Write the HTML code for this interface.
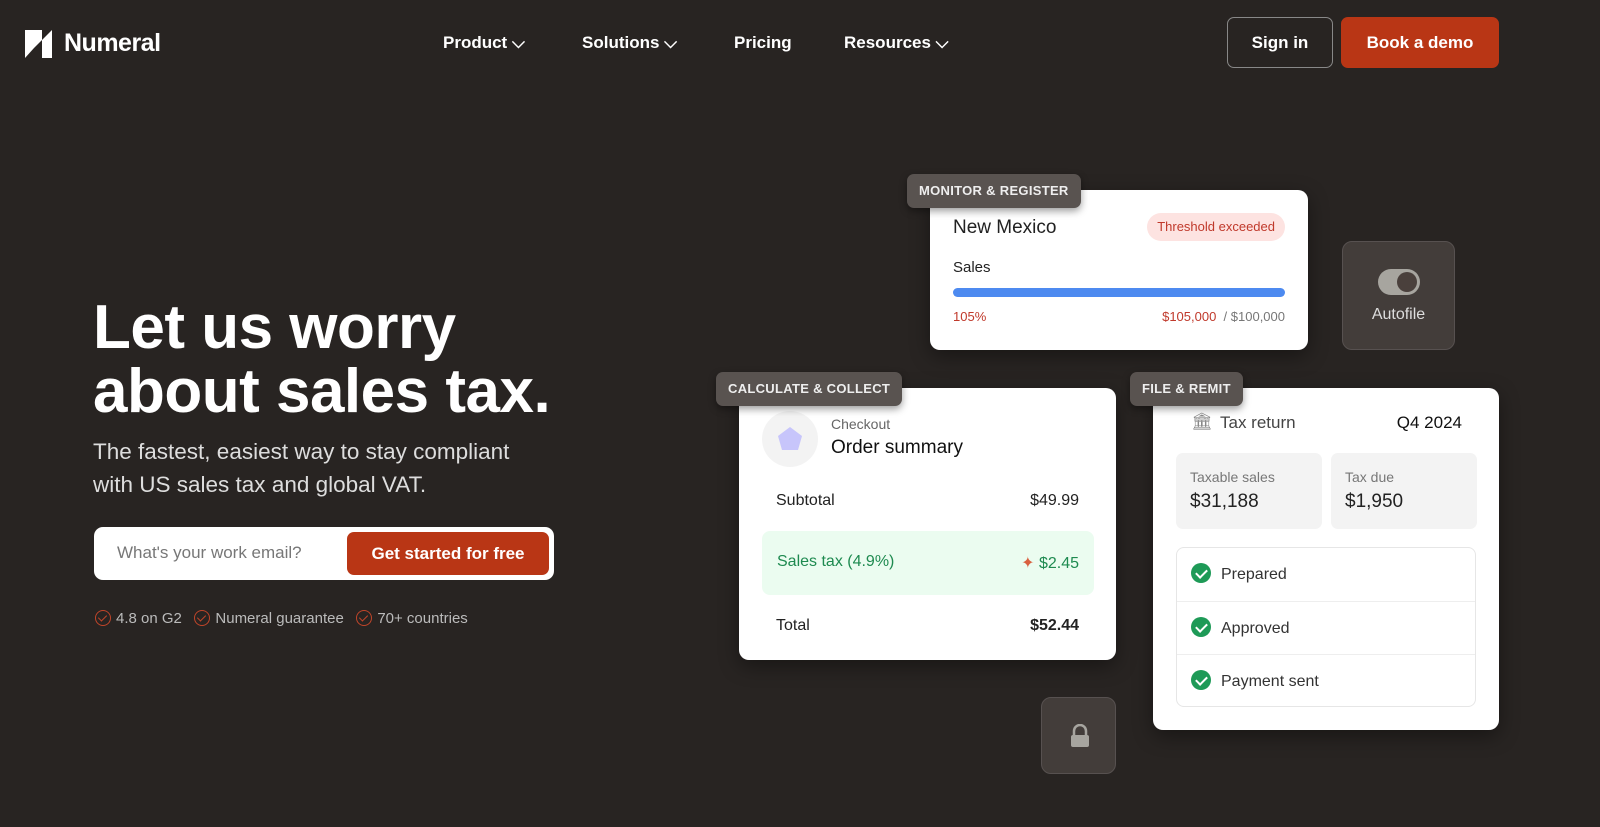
<!DOCTYPE html>
<html><head><meta charset="utf-8"><style>
*{box-sizing:border-box;margin:0;padding:0}
body{width:1600px;height:827px;background:#282422;font-family:"Liberation Sans",sans-serif;color:#fff;position:relative;overflow:hidden}
.a{position:absolute}
.nav{font-size:17px;font-weight:bold;top:33px}
.card{background:#fff;border-radius:10px;color:#222;box-shadow:0 6px 20px rgba(0,0,0,.4)}
.tag{background:#595350;color:#eee;font-size:13px;font-weight:bold;letter-spacing:.3px;padding:0 12px;height:34px;line-height:34px;border-radius:7px;box-shadow:0 3px 8px rgba(0,0,0,.4)}
.chk{display:inline-block;width:16px;height:16px;border:1.5px solid #c0452a;border-radius:50%;vertical-align:-3px;margin-right:5px;position:relative}
.chk:after{content:"";position:absolute;left:4px;top:2px;width:4px;height:7px;border:solid #c0452a;border-width:0 1.5px 1.5px 0;transform:rotate(45deg)}
.g{display:inline-block;width:20px;height:20px;background:#1e9a57;border-radius:50%;position:relative;vertical-align:-4px;margin-right:10px}
.g:after{content:"";position:absolute;left:7px;top:4px;width:5px;height:9px;border:solid #fff;border-width:0 2px 2px 0;transform:rotate(45deg)}
.row{position:absolute;left:0;right:0;height:53px;line-height:53px;padding-left:14px;font-size:16px;color:#333}
</style></head><body>
<div class="a" style="left:25px;top:30px;width:27px;height:28px">
<svg width="27" height="28"><polygon points="0,0 9,0 9,18 0,28" fill="#fff"/><polygon points="27,0 27,28 17,28 17,10" fill="#fff"/><polygon points="9,18 17,10 17,0 9,0" fill="#fff"/></svg></div>
<div class="a" style="left:64px;top:29px;font-size:25px;font-weight:bold;letter-spacing:-.5px">Numeral</div>
<div class="a nav" style="left:443px">Product ⌵</div>
<div class="a nav" style="left:582px">Solutions ⌵</div>
<div class="a nav" style="left:734px">Pricing</div>
<div class="a nav" style="left:844px">Resources ⌵</div>
<div class="a" style="left:1227px;top:17px;width:106px;height:51px;border:1px solid #888;border-radius:7px;text-align:center;line-height:49px;font-size:17px;font-weight:bold">Sign in</div>
<div class="a" style="left:1341px;top:17px;width:158px;height:51px;background:#b93615;border-radius:7px;text-align:center;line-height:51px;font-size:17px;font-weight:bold">Book a demo</div>

<div class="a" style="left:93px;top:296px;font-size:62px;font-weight:bold;line-height:64px;letter-spacing:-.5px">Let us worry<br>about sales tax.</div>
<div class="a" style="left:93px;top:435px;font-size:22.5px;line-height:33px;color:#ddd">The fastest, easiest way to stay compliant<br>with US sales tax and global VAT.</div>
<div class="a" style="left:94px;top:527px;width:460px;height:53px;background:#fff;border-radius:9px"></div>
<div class="a" style="left:117px;top:543px;font-size:17px;color:#777">What's your work email?</div>
<div class="a" style="left:347px;top:532px;width:202px;height:43px;background:#b93615;border-radius:7px;text-align:center;line-height:43px;font-size:17px;font-weight:bold">Get started for free</div>
<div class="a" style="left:95px;top:610px;font-size:15px;color:#bbb;white-space:nowrap"><span class="chk"></span>4.8 on G2 &nbsp;&nbsp;<span class="chk"></span>Numeral guarantee &nbsp;&nbsp;<span class="chk"></span>70+ countries</div>

<div class="a card" style="left:930px;top:190px;width:378px;height:160px">
<div class="a" style="left:23px;top:27px;font-size:19px">New Mexico</div>
<div class="a" style="right:23px;top:23px;background:#fde3e1;color:#c0392b;font-size:13px;padding:0 10px;height:28px;line-height:28px;border-radius:14px">Threshold exceeded</div>
<div class="a" style="left:23px;top:69px;font-size:15px">Sales</div>
<div class="a" style="left:23px;top:98px;width:332px;height:9px;background:#4d8af0;border-radius:5px"></div>
<div class="a" style="left:23px;top:119px;font-size:13px;color:#c0392b">105%</div>
<div class="a" style="right:23px;top:119px;font-size:13px;color:#777"><span style="color:#c0392b">$105,000</span>&nbsp; / $100,000</div>
</div>
<div class="a tag" style="left:907px;top:174px">MONITOR &amp; REGISTER</div>

<div class="a" style="left:1342px;top:241px;width:113px;height:109px;background:#433d3a;border-radius:10px;border:1px solid #575150">
<div class="a" style="left:35px;top:27px;width:42px;height:26px;background:#a7a59f;border-radius:13px"><div class="a" style="right:3px;top:3px;width:20px;height:20px;background:#4a403c;border-radius:50%"></div></div>
<div class="a" style="left:0;right:0;top:64px;text-align:center;font-size:16px;color:#ddd">Autofile</div></div>

<div class="a card" style="left:739px;top:388px;width:377px;height:272px">
<div class="a" style="left:23px;top:23px;width:56px;height:56px;background:#f3f3f3;border-radius:50%"><svg class="a" style="left:15px;top:15px" width="26" height="26"><polygon points="13,1 25,10 21,24 5,24 1,10" fill="#c7c5fb"/></svg></div>
<div class="a" style="left:92px;top:28px;font-size:14px;color:#666">Checkout</div>
<div class="a" style="left:92px;top:49px;font-size:19px;color:#111">Order summary</div>
<div class="a" style="left:37px;top:104px;font-size:16px">Subtotal</div>
<div class="a" style="right:37px;top:104px;font-size:16px">$49.99</div>
<div class="a" style="left:23px;top:143px;width:332px;height:64px;background:#ebfcf0;border-radius:8px">
<div class="a" style="left:15px;top:22px;font-size:16px;color:#1e8a50">Sales tax (4.9%)</div>
<div class="a" style="right:15px;top:22px;font-size:16px;color:#1e8a50"><span style="color:#d9603f">✦</span> $2.45</div></div>
<div class="a" style="left:37px;top:229px;font-size:16px">Total</div>
<div class="a" style="right:37px;top:229px;font-size:16px;font-weight:bold">$52.44</div>
</div>
<div class="a tag" style="left:716px;top:372px">CALCULATE &amp; COLLECT</div>

<div class="a" style="left:1041px;top:697px;width:75px;height:77px;background:#433d3a;border-radius:10px;border:1px solid #575150">
<svg class="a" style="left:27px;top:26px" width="22" height="24"><path d="M5 11V7a6 6 0 0 1 12 0v4" stroke="#a7a59f" stroke-width="2.5" fill="none"/><rect x="2" y="11" width="18" height="12" rx="2" fill="#a7a59f"/></svg></div>

<div class="a card" style="left:1153px;top:388px;width:346px;height:342px">
<div class="a" style="left:38px;top:24px;font-size:17px;color:#888">🏛</div>
<div class="a" style="left:67px;top:25px;font-size:17px;color:#444">Tax return</div>
<div class="a" style="right:37px;top:25px;font-size:17px;color:#111">Q4 2024</div>
<div class="a" style="left:23px;top:65px;width:146px;height:76px;background:#f3f3f3;border-radius:7px"><div class="a" style="left:14px;top:16px;font-size:14px;color:#777">Taxable sales</div><div class="a" style="left:14px;top:38px;font-size:19px">$31,188</div></div>
<div class="a" style="left:178px;top:65px;width:146px;height:76px;background:#f3f3f3;border-radius:7px"><div class="a" style="left:14px;top:16px;font-size:14px;color:#777">Tax due</div><div class="a" style="left:14px;top:38px;font-size:19px">$1,950</div></div>
<div class="a" style="left:23px;top:159px;width:300px;height:160px;border:1px solid #e6e6e6;border-radius:8px">
<div class="row" style="top:0"><span class="g"></span>Prepared</div>
<div class="row" style="top:53px;border-top:1px solid #eee"><span class="g"></span>Approved</div>
<div class="row" style="top:106px;border-top:1px solid #eee"><span class="g"></span>Payment sent</div>
</div></div>
<div class="a tag" style="left:1130px;top:372px">FILE &amp; REMIT</div>
</body></html>
